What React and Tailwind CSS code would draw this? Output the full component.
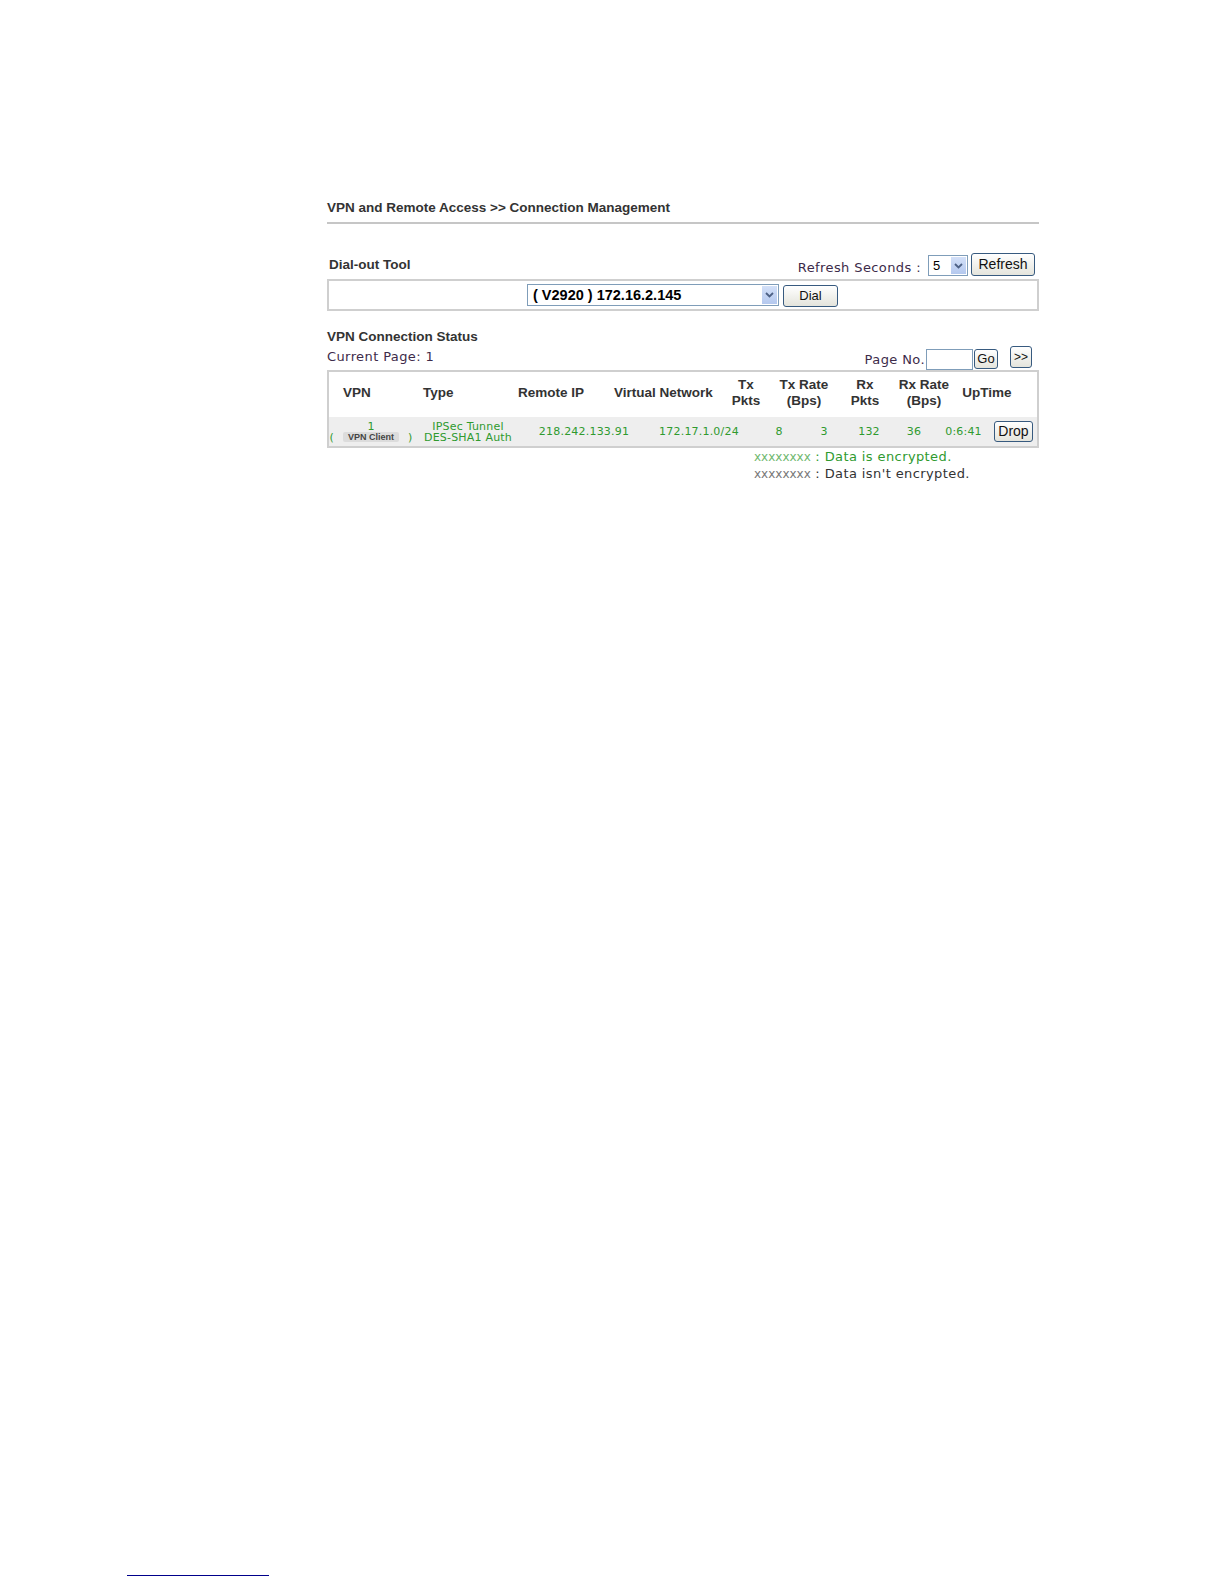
import React from 'react';

const arial = "font-['Liberation_Sans',Arial,sans-serif]";
const verdana = "font-['DejaVu_Sans',Verdana,sans-serif]";

const btn =
  'flex items-center justify-center rounded-[3px] border border-[#375a7f] bg-gradient-to-b from-white to-[#e4e4dc] text-[#111] ' +
  arial;

function Arrow() {
  return (
    <span className="flex h-full w-[15px] items-center justify-center bg-gradient-to-b from-[#d3e0f8] to-[#b4c8ee]">
      <svg width="9" height="6" viewBox="0 0 9 6">
        <path d="M1 1 L4.5 4.5 L8 1" fill="none" stroke="#4d6185" strokeWidth="1.8" />
      </svg>
    </span>
  );
}

const headers = [
  { w: 'w-[80px] text-left', lines: ['VPN'] },
  { w: 'w-[95px] text-left', lines: ['Type'] },
  { w: 'w-[96px] text-left', lines: ['Remote IP'] },
  { w: 'w-[110px] text-left', lines: ['Virtual Network'] },
  { w: 'w-[44px] text-center', lines: ['Tx', 'Pkts'] },
  { w: 'w-[72px] text-center', lines: ['Tx Rate', '(Bps)'] },
  { w: 'w-[50px] text-center', lines: ['Rx', 'Pkts'] },
  { w: 'w-[68px] text-center', lines: ['Rx Rate', '(Bps)'] },
  { w: 'w-[58px] text-center', lines: ['UpTime'] },
];

export default function App() {
  return (
    <div className="flex h-[1584px] w-[1224px] flex-col bg-white">
      <div className="ml-[327px] w-[712px] pt-[200px]">
        {/* page title */}
        <h1 className={`${arial} text-[13.5px] font-bold leading-4 text-[#333]`}>
          VPN and Remote Access &gt;&gt; Connection Management
        </h1>
        <div className="mt-[6px] h-[2px] bg-[#c6c6c6]" />

        {/* dial-out tool */}
        <div className="mt-[29px] flex items-end justify-between pr-[4px]">
          <span className={`${arial} pb-[3px] pl-[2px] text-[13.5px] font-bold leading-4 text-[#333]`}>
            Dial-out Tool
          </span>
          <div className="flex items-end">
            <span className={`${verdana} text-[13px] leading-4 tracking-[0.4px] text-[#3d2b4a]`}>
              Refresh Seconds :
            </span>
            <div className="ml-[7px] flex h-[21px] w-[40px] items-stretch border border-[#7f9db9] bg-white p-px">
              <span className={`${arial} flex-1 pl-[3px] text-[13px] leading-[17px] text-black`}>5</span>
              <Arrow />
            </div>
            <button className={`${btn} ml-[3px] h-[23px] w-[64px] text-[14px]`}>Refresh</button>
          </div>
        </div>
        <div className="mt-[3px] flex h-[32px] items-center border-2 border-[#cfcfcf] pl-[198px]">
          <div className="flex h-[22px] w-[252px] items-stretch border border-[#7f9db9] bg-white p-px">
            <span className={`${arial} flex-1 pl-[4px] text-[14.5px] font-bold leading-[18px] text-black`}>
              ( V2920 ) 172.16.2.145
            </span>
            <Arrow />
          </div>
          <button className={`${btn} ml-[4px] mt-[1px] h-[22px] w-[55px] text-[13px]`}>Dial</button>
        </div>

        {/* status */}
        <h2 className={`${arial} mt-[18px] text-[13.5px] font-bold leading-4 text-[#333]`}>
          VPN Connection Status
        </h2>
        <div className="flex h-[24px] items-center justify-between pr-[7px]">
          <span className={`${verdana} text-[13px] leading-4 tracking-[0.4px] text-[#3d2b4a]`}>Current Page: 1</span>
          <div className="flex items-center">
            <span className={`${verdana} mt-[5px] text-[13px] leading-4 tracking-[0.4px] text-[#3d2b4a]`}>
              Page No.
            </span>
            <div className="ml-px mt-[4px] h-[21px] w-[47px] border border-[#7f9db9] bg-white" />
            <button className={`${btn} ml-px mt-[4px] h-[20px] w-[24px] text-[13px]`}>Go</button>
            <button className={`${btn} ml-[12px] h-[22px] w-[22px] text-[12px]`}>&gt;&gt;</button>
          </div>
        </div>

        <div className="mt-px border-2 border-[#cfcfcf]">
          <div className={`${arial} flex h-[45px] items-center pb-[3px] pl-[14px] text-[13.5px] font-bold leading-4 text-[#333]`}>
            {headers.map((h) => (
              <div key={h.lines[0]} className={h.w}>
                {h.lines.map((l) => (
                  <div key={l}>{l}</div>
                ))}
              </div>
            ))}
          </div>
          <div className={`${verdana} flex h-[29px] items-center bg-[#eeeeee] text-[11px] leading-[11px] tracking-[0.2px] text-[#2f9a2f]`}>
            <div className="flex w-[84px] flex-col items-center">
              <span>1</span>
              <span className="flex items-center gap-[9px]">
                <span>(</span>
                <span className={`${arial} rounded-[2px] bg-[#dcdcdc] px-[5px] text-[9px] font-bold leading-[10px] tracking-normal text-[#444]`}>
                  VPN Client
                </span>
                <span>)</span>
              </span>
            </div>
            <div className="flex w-[110px] flex-col items-center">
              <span>IPSec Tunnel</span>
              <span>DES-SHA1 Auth</span>
            </div>
            <div className="w-[122px] text-center">218.242.133.91</div>
            <div className="w-[108px] text-center">172.17.1.0/24</div>
            <div className="w-[52px] text-center">8</div>
            <div className="w-[38px] text-center">3</div>
            <div className="w-[52px] text-center">132</div>
            <div className="w-[38px] text-center">36</div>
            <div className="w-[61px] text-center">0:6:41</div>
            <button className={`${btn} h-[21px] w-[39px] text-[14px] tracking-normal`}>Drop</button>
          </div>
        </div>

        {/* legend */}
        <div className={`${verdana} mt-px pl-[427px] text-[13px] tracking-[0.4px]`}>
          <div className="leading-4 text-[#2f9a2f]">
            <span className="text-[12px] tracking-normal text-[#6fb86f]">xxxxxxxx</span> : Data is encrypted.
          </div>
          <div className="mt-px leading-4 text-[#333]">
            <span className="text-[12px] tracking-normal text-[#777]">xxxxxxxx</span> : Data isn't encrypted.
          </div>
        </div>
      </div>

      <div className="mb-[8px] ml-[127px] mt-auto h-px w-[142px] bg-[#00008b]" />
    </div>
  );
}
